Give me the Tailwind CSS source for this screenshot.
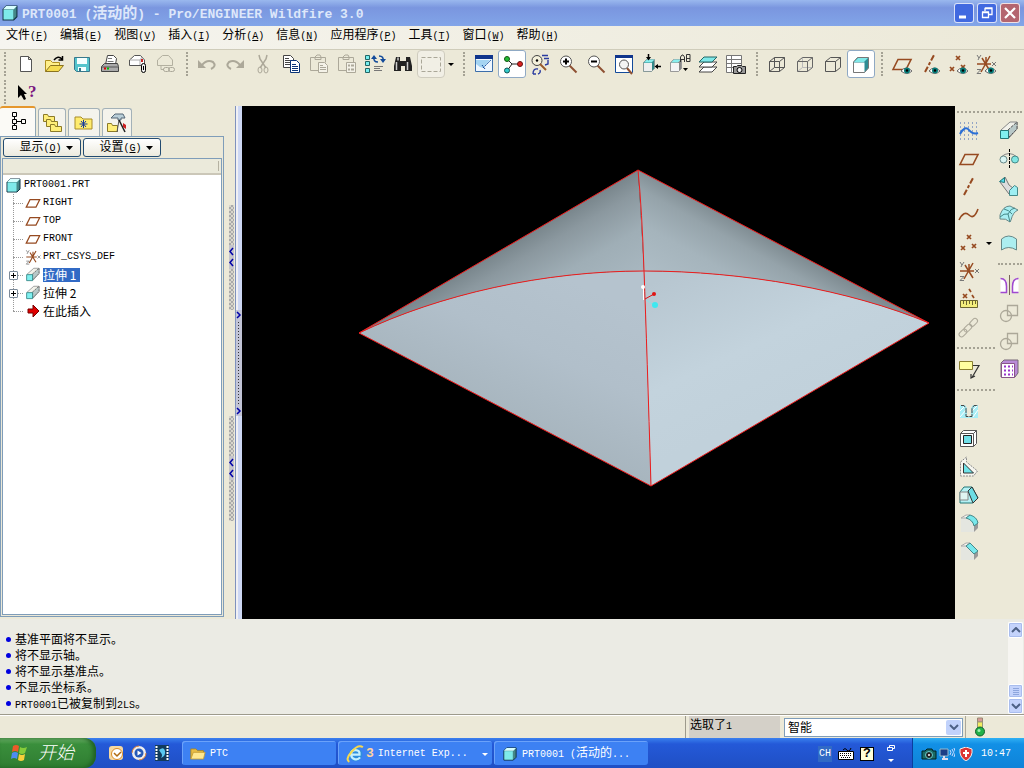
<!DOCTYPE html>
<html lang="zh-CN">
<head>
    <meta charset="UTF-8">
    <meta name="viewport" content="width=device-width, initial-scale=1.0">
    <title>PRT0001 (活动的) - Pro/ENGINEER Wildfire 3.0</title>
    <script src="https://cdn.jsdelivr.net/npm/@tailwindcss/browser@4"></script>
    <style>
        body { font-family: 'Liberation Mono', 'Noto Sans CJK SC', monospace; }
        .zh { font-family: 'Noto Sans CJK SC', sans-serif; font-size: 12px; }
        button, select { font-family: inherit; }
        symbol { fill: none; overflow: visible; }
    </style>
</head>
<body class="flex h-screen flex-col overflow-hidden bg-[#ece9d8] text-[10px] leading-4 text-black">

    <!-- Shared icons, all on a 24x24 grid -->
    <svg class="hidden">
        <symbol id="part" viewBox="0 0 24 24"><path d="M6 9l3-3h10v10l-3 3H6z" fill="#488" stroke="#134"/><path d="M6.500 9.500h9v9h-9z" fill="#7eeaea"/><path d="M6 9l3-3h10l-3 3z" fill="#d8ffff"/></symbol>
        <symbol id="new" viewBox="0 0 24 24"><path d="M6.500 4.500h8l3 3v12h-11zM14.500 4.500v3h3" fill="#fff" stroke="#555"/></symbol>
        <symbol id="open" viewBox="0 0 24 24"><path d="M3.500 19.500v-11h5l2 2h7v3" fill="#ffef8a" stroke="#b09020"/><path d="M3.500 19.500l5-6h13l-5 6z" fill="#f5dc50" stroke="#8a7320"/><path d="M12 8q4-5 8-1M20.500 4v4h-4" stroke="#000" stroke-width="1.500"/></symbol>
        <symbol id="save" viewBox="0 0 24 24"><path d="M4.500 5.500h15v14h-13l-2-2z" fill="#54c4cc" stroke="#38788c"/><path d="M7 6h10v6H7zM8 15h8v4H8z" fill="#f4ffff"/><path d="M9 16h2v3H9z" fill="#38788c"/></symbol>
        <symbol id="print" viewBox="0 0 24 24"><path d="M7.500 12.500l2-9h6l3 3-1 6z" fill="#fff" stroke="#444"/><path d="M10 6.500h4M9.500 9.500h6" stroke="#777"/><path d="M3.500 14.500l3-3h13l1 3v5h-17z" fill="#aaa" stroke="#444"/><path d="M4 15h16" stroke="#555"/><path d="M6 16.500h2" stroke="#d00" stroke-width="2"/><path d="M9 16.500h2" stroke="#0b0" stroke-width="2"/></symbol>
        <symbol id="mail" viewBox="0 0 24 24"><path d="M3.500 13.500V8l5-4.500h6l4 4.500v5.500z" fill="#fff" stroke="#555"/><path d="M4 8h10l2-3M14 8v5" stroke="#aaa"/><path d="M15 7h2v3h-2z" fill="#c22"/><rect x="15.500" y="11.500" width="4" height="9" rx="2" fill="#eee" stroke="#000"/><path d="M17.500 14v4" stroke="#000"/></symbol>
        <symbol id="maillink" viewBox="0 0 24 24"><path d="M3.500 13.500V8l5-4.500h6l4 4.500v5.500zM7 13.500v4h3" stroke="#b3b0a0"/><rect x="9.500" y="15.500" width="6" height="4" rx="2" stroke="#aaa798"/><rect x="14.500" y="15.500" width="6" height="4" rx="2" stroke="#aaa798"/></symbol>
        <symbol id="undo" viewBox="0 0 24 24"><path d="M7 13q5-6 11-3 4 4-2 7" stroke="#aca899" stroke-width="2"/><path d="M3 8v8h8z" fill="#aca899"/></symbol>
        <symbol id="redo" viewBox="0 0 24 24"><path d="M17 13q-5-6-11-3-4 4 2 7" stroke="#aca899" stroke-width="2"/><path d="M21 8v8h-8z" fill="#aca899"/></symbol>
        <symbol id="cut" viewBox="0 0 24 24" stroke="#aca899"><path d="M8 3l1 4 6 9M16 3l-1 4-6 9" stroke-width="1.500"/><ellipse cx="9" cy="18" rx="2" ry="3"/><ellipse cx="15" cy="18" rx="2" ry="3"/></symbol>
        <symbol id="copy" viewBox="0 0 24 24"><path d="M4.500 3.500h7l3 3v9h-10z" fill="#fff" stroke="#444"/><path d="M6 6.500h4M6 8.500h6M6 10.500h6M6 12.500h6" stroke="#444"/><path d="M11.500 8.500h6l3 3v9h-9z" fill="#fff" stroke="#0a3478"/><path d="M13 12.500h4M13 14.500h6M13 16.500h6M13 18.500h6" stroke="#0a3478"/></symbol>
        <symbol id="paste" viewBox="0 0 24 24"><path d="M11.500 18.500h-8v-13h15v5M8 7.500V5l2-2h3l1 2v2.500z" stroke="#aca899"/><path d="M11.500 10.500h6l3 3v7h-9z" fill="#f4f2e8" stroke="#aca899"/><path d="M13 13.500h3M13 15.500h6M13 17.500h6" stroke="#aca899"/></symbol>
        <symbol id="pastesp" viewBox="0 0 24 24"><path d="M11.500 18.500h-8v-13h15v5M8 7.500V5l2-2h3l1 2v2.500z" stroke="#aca899"/><path d="M11.500 10.500h9v10h-9z" fill="#f4f2e8" stroke="#aca899"/><path d="M13 13.500h2M16 13.500h3M13 17.500h2M16 17.500h3" stroke="#aca899" stroke-width="2"/></symbol>
        <symbol id="regen" viewBox="0 0 24 24"><path d="M2.500 3.500h4v4h-4zM2.500 9.500h4v4h-4zM2.500 16.500h4v4h-4z" fill="#7ee" stroke="#266"/><path d="M16 4q5 0 4 5M15 10q-5 0-4-5" stroke="#124a9a" stroke-width="1.500"/><path d="M17 7h6l-3 4zM8 7h6l-3-4z" fill="#124a9a"/><path d="M11 14.500h9M11 16.500h6M11 18.500h8" stroke="#777"/></symbol>
        <symbol id="find" viewBox="0 0 24 24"><path d="M5 5h4v4h6V5h4l2 9v5h-7v-5h-4v5H3v-5z" fill="#222"/><path d="M5.500 10v8M16.500 10v8M7 5.500v3" stroke="#ccc" stroke-width="1.500"/></symbol>
        <symbol id="selbox" viewBox="0 0 24 24"><path d="M2.500 5.500h19v14h-19z" stroke="#aaa798" stroke-dasharray="4 2"/></symbol>
        <symbol id="repaint" viewBox="0 0 24 24"><path d="M3.500 3.500h17v16h-17z" fill="#eff7ff" stroke="#3c6eaa"/><path d="M3 3h18v4H3z" fill="#10358c"/><path d="M4 8h14l-7 8q-4-1-7-4z" fill="#a5d4f2"/><path d="M11 16l8-8M10 13l3 4" stroke="#124a9a" stroke-dasharray="2 1"/></symbol>
        <symbol id="spin" viewBox="0 0 24 24"><path d="M7 7l5 5h8M12 12l-5 7" stroke="#222"/><circle cx="7" cy="7" r="2.500" fill="#2b3" stroke="#151"/><circle cx="20" cy="12" r="2.500" fill="#d22" stroke="#611"/><circle cx="7" cy="18.500" r="2.500" fill="#3cc" stroke="#155"/></symbol>
        <symbol id="orient" viewBox="0 0 24 24"><circle cx="9" cy="8.500" r="5" fill="#f4f1dc" stroke="#444"/><circle cx="9" cy="8.500" r="1.200" fill="#000"/><path d="M12 12l6 6" stroke="#9a5a2a" stroke-width="2"/><path d="M14 3.500h6M16 6.500h5M20 8v4l-3 1M5 22q0-6 5-5M5 22h3M10 22q3-1 2-4" stroke="#2a3ca0" stroke-width="1.400"/></symbol>
        <symbol id="zoomin" viewBox="0 0 24 24"><path d="M13.500 13.500l7 7" stroke="#8e5032" stroke-width="2"/><circle cx="10" cy="9.500" r="5.500" fill="#fff" stroke="#555"/><path d="M7 9.500h6M10 6.500v6" stroke="#000" stroke-width="2"/></symbol>
        <symbol id="zoomout" viewBox="0 0 24 24"><path d="M13.500 13.500l7 7" stroke="#8e5032" stroke-width="2"/><circle cx="10" cy="9.500" r="5.500" fill="#fff" stroke="#555"/><path d="M7 9.500h6" stroke="#000" stroke-width="2"/></symbol>
        <symbol id="refit" viewBox="0 0 24 24"><path d="M3.500 3.500h17v17h-17z" fill="#fff" stroke="#124a9a"/><path d="M3 3h18v3H3z" fill="#10358c"/><path d="M15 16l5 6" stroke="#8e5032" stroke-width="2"/><circle cx="12" cy="12.500" r="4.500" fill="#f4f4f4" stroke="#555"/></symbol>
        <symbol id="reorient" viewBox="0 0 24 24"><path d="M3.500 10.500l3-3h8v9l-3 3h-8z" fill="#388" stroke="#899"/><path d="M4 11h8v8H4z" fill="#eee"/><path d="M4 10.500l3-3h7.500l-3 3z" fill="#8ee"/><path d="M8.500 2v5M21 14.500h-5" stroke="#000" stroke-width="1.500"/><path d="M6 5h5L8.500 8.500zM18 12v5l-3.500-2.500z" fill="#000"/></symbol>
        <symbol id="views" viewBox="0 0 24 24"><path d="M2.500 10.500l3-3h8v9l-3 3h-8z" fill="#888" stroke="#999"/><path d="M3 11h8v8H3z" fill="#f4f4f4"/><path d="M3 10.500l3-3h7l-3 3z" fill="#8ee"/><path d="M12.500 10V5l1.500-2h1l1.500 2v5M12.500 7.500h4M18.500 2.500v7h3.500v-3h-3.500M22 6.500v-4h-3.500" stroke="#333"/><path d="M15 16h5l-2.500 3z" fill="#000"/></symbol>
        <symbol id="layers" viewBox="0 0 24 24" stroke="#444"><path d="M3 20l5-5h13l-5 5z" fill="#fff"/><path d="M3 15l5-5h13l-5 5z" fill="#fff"/><path d="M3 10l5-5h13l-5 5z" fill="#7fe8e8" stroke="#266"/></symbol>
        <symbol id="viewmgr" viewBox="0 0 24 24"><path d="M2.500 3.500h15v17h-15zM7.500 3.500v17M2.500 7.500h15M2.500 11.500h15M2.500 15.500h15" fill="#fff" stroke="#777"/><path d="M9.500 14.500h3l1-1h4l1 1h3v7h-12z" fill="#999" stroke="#222"/><circle cx="15.500" cy="18" r="2.500" fill="#eee" stroke="#000"/></symbol>
        <symbol id="wire" viewBox="0 0 24 24" stroke="#555"><path d="M4.500 9.500h10v10h-10zM9.500 5.500h10v10h-10zM4.500 9.500l5-4M14.500 9.500l5-4M14.500 19.500l5-4M4.500 19.500l5-4"/></symbol>
        <symbol id="hidden" viewBox="0 0 24 24" stroke="#666"><path d="M9.500 5.500v10h10M4.500 19.500l5-4" stroke="#bbb"/><path d="M4.500 9.500h10v10h-10zM9.500 5.500h10v10M4.500 9.500l5-4M14.500 9.500l5-4M14.500 19.500l5-4"/></symbol>
        <symbol id="nohidden" viewBox="0 0 24 24" stroke="#555"><path d="M4.500 9.500h10v10h-10zM9.500 5.500h10v10M4.500 9.500l5-4M14.500 9.500l5-4M14.500 19.500l5-4"/></symbol>
        <symbol id="shade" viewBox="0 0 24 24"><path d="M4.500 10l4-4.500h11v10.500l-4 4.500h-11z" fill="#2e8c94" stroke="#777"/><path d="M5 10.500h10.500V20H5z" fill="#fff"/><path d="M5 10l4-4h10l-4 4z" fill="#80e8e8"/></symbol>
        <symbol id="plane" viewBox="0 0 24 24"><path d="M3 17.500L8 7.500h13l-5 10z" stroke="#964a20" stroke-width="1.600"/></symbol>
        <symbol id="axis" viewBox="0 0 24 24"><path d="M7 20L16 3" stroke="#964a20" stroke-width="2" stroke-dasharray="6 2 3 2"/></symbol>
        <symbol id="points" viewBox="0 0 24 24"><path d="M10 4l4 4M14 4l-4 4M4 15l4 4M8 15l-4 4M15 13l4 4M19 13l-4 4" stroke="#964a20" stroke-width="1.700"/></symbol>
        <symbol id="csys" viewBox="0 0 24 24"><path d="M3 12h14M7 20L16 4M8 6l8 13M12 5v7" stroke="#964a20" stroke-width="1.500"/><path d="M3 3l2 3 2-3M5 6l-1 2M18 10l4 4M22 10l-4 4M3 17.500h4l-4 4h4" stroke="#777"/></symbol>
        <symbol id="eye" viewBox="0 0 24 24"><path d="M11 19q5-6 11 0-5 5-11 0z" fill="#fff" stroke="#666"/><circle cx="17" cy="18.500" r="3" fill="#077b78"/><circle cx="17" cy="18.500" r="1.200" fill="#000"/></symbol>
        <symbol id="sketch" viewBox="0 0 24 24"><path d="M3 4h18M3 8h18M3 12h18M3 16h18M3 20h18" stroke="#3b62b4" stroke-dasharray="1 3"/><path d="M3 15q5-9 9-4t9 3" stroke="#2a6fd6" stroke-width="2"/></symbol>
        <symbol id="curve" viewBox="0 0 24 24"><path d="M2 17q5-10 10-5t9-6" stroke="#964a20" stroke-width="1.600"/></symbol>
        <symbol id="analysis" viewBox="0 0 24 24"><path d="M6 7l4 4M10 7l-4 4M12 2l2 3M15 8l2 3" stroke="#964a20" stroke-width="1.700"/><path d="M3.500 13.500h17v7h-17z" fill="#f3ee7c" stroke="#6b6530"/><path d="M6.500 14v3M9.500 14v4M12.500 14v3M15.500 14v4M18.500 14v3" stroke="#6b6530"/></symbol>
        <symbol id="chain" viewBox="0 0 24 24" stroke="#aca899"><g transform="rotate(-45 12 12)"><rect x="-1" y="9.500" width="9" height="5" rx="2.500"/><rect x="6" y="9.500" width="9" height="5" rx="2.500"/><rect x="14" y="9.500" width="9" height="5" rx="2.500"/></g></symbol>
        <symbol id="note" viewBox="0 0 24 24"><path d="M2.500 4.500h13v8h-13z" fill="#ffffa0" stroke="#8a8030"/><path d="M16 8.500h6l-7 12M14 17v4l4-2" stroke="#333" stroke-width="1.200"/></symbol>
        <symbol id="hole" viewBox="0 0 24 24"><path d="M3 6h5l2 3v9h4V9l2-3h5v13H3z" fill="#a8eef6"/><path d="M3 12l5-5M3 18l6-7M16 18l5-7M15 12l5-5" stroke="#fff"/><path d="M4 6.500h3l2 3v8h6v-8l2-3h4" stroke="#444" stroke-dasharray="5 1"/></symbol>
        <symbol id="shell" viewBox="0 0 24 24"><path d="M3.500 6.500l3-3h13v13l-3 3h-13z" fill="#fff" stroke="#555"/><path d="M3.500 6.500h13v13M16.500 6.500l3-3" stroke="#555"/><path d="M6.500 8.500h8v8h-8z" fill="#70dfe8" stroke="#222"/></symbol>
        <symbol id="rib" viewBox="0 0 24 24"><path d="M3.500 7l6-5v5l11 9-4 5h-13z" fill="#f6f6f0" stroke="#888" stroke-dasharray="2 1"/><path d="M6.500 8v10h10z" fill="#6fe4ea" stroke="#333"/></symbol>
        <symbol id="draft" viewBox="0 0 24 24"><path d="M3 9l4-5h8l6 11-5 5H3z" fill="#b4f1f4" stroke="#277"/><path d="M3 9h8v8H3z" fill="#e0f5f2" stroke="#888"/><path d="M11 8l4-4 6 11-5 5z" fill="#6cdde4" stroke="#333"/></symbol>
        <symbol id="round" viewBox="0 0 24 24"><path d="M4 7h5q7 2 8 8v6H4z" fill="#e4e6e0"/><path d="M17 14l4-3v6l-4 4z" fill="#999"/><path d="M4 7l5-3h4L9 7z" fill="#f6f6f0" stroke="#aaa"/><path d="M9 7l4-3q7 2 8 8l-4 3q-1-6-8-8z" fill="#79e8ec" stroke="#488"/></symbol>
        <symbol id="chamfer" viewBox="0 0 24 24"><path d="M4 7h5l8 8v6H4z" fill="#e4e6e0"/><path d="M17 14l4-3v6l-4 4z" fill="#999"/><path d="M4 7l5-3h4L9 7z" fill="#f6f6f0" stroke="#aaa"/><path d="M9 7l4-3 8 8-4 3z" fill="#79e8ec" stroke="#488"/></symbol>
        <symbol id="extrude" viewBox="0 0 24 24"><path d="M4 11L13 3h7v7l-8 9" fill="#f1f1ea" stroke="#888"/><path d="M11 11l9-8v7l-9 9z" fill="#b8c8c8" stroke="#555" stroke-dasharray="3 1"/><path d="M3.500 11.500h8v8h-8z" fill="#7ff0f0" stroke="#277"/></symbol>
        <symbol id="revolve" viewBox="0 0 24 24"><path d="M4 10q8-7 16 0" stroke="#888"/><circle cx="6.500" cy="12.500" r="3.500" fill="#d8f4f2" stroke="#688"/><circle cx="18" cy="12.500" r="3.500" fill="#80e6e2" stroke="#488"/><path d="M12.500 2v19" stroke="#000" stroke-dasharray="3 1"/></symbol>
        <symbol id="sweep" viewBox="0 0 24 24"><path d="M3 7l5-5 4 8 4 3-4 6z" fill="#ddd" stroke="#777"/><path d="M2.500 6.500l5-4v5z" fill="#5de" stroke="#277"/><path d="M12.500 15.500l5-5 3 2v8h-8z" fill="#9eeef2" stroke="#488"/></symbol>
        <symbol id="blend" viewBox="0 0 24 24"><path d="M3 12q3-9 10-9l8 4q-5 2-7 10l-1 2q-4-4-10-3z" fill="#a8eef2" stroke="#688"/><path d="M3 14q4-4 8-3 3-6 7-6M7 6q5 1 8 5M11 11l2 8" stroke="#488"/></symbol>
        <symbol id="style" viewBox="0 0 24 24"><path d="M4.500 8q7-6 15 0v11q-8-5-15 0z" fill="#aceef0" stroke="#688"/></symbol>
        <symbol id="mirror" viewBox="0 0 24 24"><path d="M12.500 2v20" stroke="#765"/><path d="M3.500 5.500q6 0 6 8v6h-6M21.500 5.500q-6 0-6 8v6h6" fill="#fff" stroke="#a04ad0" stroke-width="1.500"/></symbol>
        <symbol id="merge" viewBox="0 0 24 24" stroke="#aca899" stroke-width="1.300"><circle cx="9" cy="15" r="5.500"/><path d="M10.500 4.500h10v10h-10z"/></symbol>
        <symbol id="pattern" viewBox="0 0 24 24"><path d="M4 6l3-3h14v13l-3 4H4z" fill="#b98ad8" stroke="#767"/><path d="M4.500 6.500h13v14h-13z" fill="#fff" stroke="#858"/><path d="M7 9.500h9M7 13.500h9M7 17.500h9" stroke="#93c" stroke-width="2" stroke-dasharray="2 2"/></symbol>
        <symbol id="folder" viewBox="0 0 24 24"><path d="M3 18V6h6l2 2h9v10z" fill="#ffec6e" stroke="#a88c28"/></symbol>
        <symbol id="folder-xp" viewBox="0 0 24 24"><path d="M4 18V6h6l2 2h7v3" fill="#e9bd45" stroke="#a88420"/><path d="M4 18l3-8h14l-2 8z" fill="#ffe890" stroke="#c49a30"/></symbol>
    </svg>

    <!-- Title bar -->
    <header class="flex h-[26px] shrink-0 items-center bg-linear-to-b from-[#9ab8ee] via-[#7a96df] via-30% to-[#82a5e8] pr-1 pl-0.5 text-[#dde7fa]">
        <svg class="mr-0.5 size-4" viewBox="5 5 15 15"><use href="#part" width="24" height="24"/></svg>
        <h1 class="flex-1 pl-0.5 text-[13px] font-bold whitespace-pre">PRT0001 (<span class="zh text-[15px]!">活动的</span>) - Pro/ENGINEER Wildfire 3.0</h1>
        <div class="flex gap-[3px]">
            <button aria-label="最小化" class="size-5 rounded-[3px] border border-white/80 bg-[#4169e0]"><svg viewBox="0 0 18 18"><path d="M4 13h7" stroke="#fff" stroke-width="3"/></svg></button>
            <button aria-label="还原" class="size-5 rounded-[3px] border border-white/80 bg-[#4169e0]"><svg viewBox="0 0 18 18" fill="none" stroke="#fff"><path d="M7 7V4.500h7v6h-3M4.500 8.500h6v5h-6zM4 8h7M7 4h7.500" stroke-width="1.300"/></svg></button>
            <button aria-label="关闭" class="size-5 rounded-[3px] border border-white/80 bg-[#b4656f]"><svg viewBox="0 0 18 18"><path d="M4 4l10 10M14 4L4 14" stroke="#fff" stroke-width="2.200"/></svg></button>
        </div>
    </header>

    <!-- Menu bar -->
    <nav class="flex h-6 shrink-0 items-center gap-3 border-b border-[#cfccba] bg-linear-to-r from-[#f6f5f0] to-[#ece9d8] pb-1 pl-1.5 whitespace-nowrap">
        <button><span class="zh">文件</span>(<u>F</u>)</button>
        <button><span class="zh">编辑</span>(<u>E</u>)</button>
        <button><span class="zh">视图</span>(<u>V</u>)</button>
        <button><span class="zh">插入</span>(<u>I</u>)</button>
        <button><span class="zh">分析</span>(<u>A</u>)</button>
        <button><span class="zh">信息</span>(<u>N</u>)</button>
        <button><span class="zh">应用程序</span>(<u>P</u>)</button>
        <button><span class="zh">工具</span>(<u>T</u>)</button>
        <button><span class="zh">窗口</span>(<u>W</u>)</button>
        <button><span class="zh">帮助</span>(<u>H</u>)</button>
    </nav>

    <!-- Toolbars -->
    <div class="flex h-7 shrink-0 items-center">
        <i class="mr-[6px] ml-1 h-6 border-l-2 border-dotted border-[#a5a294]"></i>
        <button aria-label="新建" class="size-7 p-0.5"><svg class="size-6"><use href="#new"/></svg></button>
        <button aria-label="打开" class="size-7 p-0.5"><svg class="size-6"><use href="#open"/></svg></button>
        <button aria-label="保存" class="size-7 p-0.5"><svg class="size-6"><use href="#save"/></svg></button>
        <button aria-label="打印" class="size-7 p-0.5"><svg class="size-6"><use href="#print"/></svg></button>
        <button aria-label="发送邮件" class="size-7 p-0.5"><svg class="size-6"><use href="#mail"/></svg></button>
        <button aria-label="发送链接" class="size-7 p-0.5"><svg class="size-6"><use href="#maillink"/></svg></button>
        <i class="mr-[5px] ml-[6px] h-6 border-l-2 border-dotted border-[#a5a294]"></i>
        <button aria-label="撤消" class="size-7 p-0.5"><svg class="size-6"><use href="#undo"/></svg></button>
        <button aria-label="重做" class="size-7 p-0.5"><svg class="size-6"><use href="#redo"/></svg></button>
        <button aria-label="剪切" class="size-7 p-0.5"><svg class="size-6"><use href="#cut"/></svg></button>
        <button aria-label="复制" class="size-7 p-0.5"><svg class="size-6"><use href="#copy"/></svg></button>
        <button aria-label="粘贴" class="size-7 p-0.5"><svg class="size-6"><use href="#paste"/></svg></button>
        <button aria-label="选择性粘贴" class="size-7 p-0.5"><svg class="size-6"><use href="#pastesp"/></svg></button>
        <button aria-label="再生" class="size-7 p-0.5"><svg class="size-6"><use href="#regen"/></svg></button>
        <button aria-label="查找" class="size-7 p-0.5"><svg class="size-6"><use href="#find"/></svg></button>
        <button aria-label="选取框" class="size-7 rounded-sm border border-[#cfccbe] bg-[#f1efe5] p-px"><svg class="size-6"><use href="#selbox"/></svg></button>
        <button aria-label="选取选项" class="flex h-7 w-3 items-center justify-center"><svg class="h-[3px] w-[6px]" viewBox="0 0 6 3"><path d="M0 0h6L3 3z"/></svg></button>
        <i class="mr-[5px] ml-[6px] h-6 border-l-2 border-dotted border-[#a5a294]"></i>
        <button aria-label="重画" class="size-7 p-0.5"><svg class="size-6"><use href="#repaint"/></svg></button>
        <button aria-label="旋转中心" class="size-7 rounded-[3px] border border-[#8fa9c4] bg-white p-px"><svg class="size-6"><use href="#spin"/></svg></button>
        <button aria-label="定向模式" class="size-7 p-0.5"><svg class="size-6"><use href="#orient"/></svg></button>
        <button aria-label="放大" class="size-7 p-0.5"><svg class="size-6"><use href="#zoomin"/></svg></button>
        <button aria-label="缩小" class="size-7 p-0.5"><svg class="size-6"><use href="#zoomout"/></svg></button>
        <button aria-label="重新调整" class="size-7 p-0.5"><svg class="size-6"><use href="#refit"/></svg></button>
        <button aria-label="重定向" class="size-7 p-0.5"><svg class="size-6"><use href="#reorient"/></svg></button>
        <button aria-label="已命名视图" class="size-7 p-0.5"><svg class="size-6"><use href="#views"/></svg></button>
        <button aria-label="层" class="size-7 p-0.5"><svg class="size-6"><use href="#layers"/></svg></button>
        <button aria-label="视图管理器" class="size-7 p-0.5"><svg class="size-6"><use href="#viewmgr"/></svg></button>
        <i class="mr-[5px] ml-[6px] h-6 border-l-2 border-dotted border-[#a5a294]"></i>
        <button aria-label="线框" class="size-7 p-0.5"><svg class="size-6"><use href="#wire"/></svg></button>
        <button aria-label="隐藏线" class="size-7 p-0.5"><svg class="size-6"><use href="#hidden"/></svg></button>
        <button aria-label="无隐藏线" class="size-7 p-0.5"><svg class="size-6"><use href="#nohidden"/></svg></button>
        <button aria-label="着色" class="size-7 rounded-[3px] border border-[#8fa9c4] bg-white p-px"><svg class="size-6"><use href="#shade"/></svg></button>
        <i class="mr-[5px] ml-[6px] h-6 border-l-2 border-dotted border-[#a5a294]"></i>
        <button aria-label="显示基准平面" class="size-7 p-0.5"><svg class="size-6"><use href="#plane"/><use href="#eye"/></svg></button>
        <button aria-label="显示轴" class="size-7 p-0.5"><svg class="size-6"><use href="#axis"/><use href="#eye"/></svg></button>
        <button aria-label="显示点" class="size-7 p-0.5"><svg class="size-6"><use href="#points"/><use href="#eye"/></svg></button>
        <button aria-label="显示坐标系" class="size-7 p-0.5"><svg class="size-6"><use href="#csys"/><use href="#eye"/></svg></button>
    </div>
    <div class="flex h-7 shrink-0 items-center">
        <i class="mr-[6px] ml-1 h-6 border-l-2 border-dotted border-[#a5a294]"></i>
        <button aria-label="上下文帮助" class="flex size-7 items-center pl-1.5">
            <svg class="h-4 w-2.5 shrink-0" viewBox="0 0 10 16"><path d="M0 1l9 9H6l2 5-2 1-3-5-3 3z"/></svg>
            <b class="font-['Liberation_Serif'] text-[17px] text-[#7a1680]">?</b>
        </button>
    </div>

    <main class="flex min-h-0 flex-1">
        <!-- Model tree -->
        <aside class="flex w-56 shrink-0 flex-col pb-0.5">
            <div class="flex h-[30px] items-end gap-0.5">
                <button aria-label="模型树" class="flex h-[30px] w-9 items-center justify-center rounded-t-[3px] border-t-2 border-r border-[#91a7b4] border-t-[#e5972d] bg-[#fbfaf6]">
                    <svg class="size-6" fill="none" stroke="#000"><path d="M6.500 2.500h4v4h-4zM6.500 9.500h4v4h-4zM6.500 15.500h4v4h-4zM15.500 9.500h4v4h-4zM8.500 6.500v3M8.500 13.500v2M10.500 11.500h5"/></svg>
                </button>
                <button aria-label="文件夹浏览器" class="flex h-7 w-7 items-center justify-center rounded-t-[3px] border border-b-0 border-[#a3b1b8] bg-[#f4f3ec]">
                    <svg class="size-6 shrink-0" fill="#ffee78" stroke="#8c7a28"><path d="M3.500 10.500v-7h4l1 2h6v5z"/><path d="M6.500 15.500v-7h4l1 2h6v5z"/><path d="M10.500 20.500v-7h4l1 2h6v5z"/></svg>
                </button>
                <button aria-label="收藏夹" class="flex h-7 w-8 items-center justify-center rounded-t-[3px] border border-b-0 border-[#a3b1b8] bg-[#f4f3ec]">
                    <svg class="size-6" fill="none"><use href="#folder"/><path d="M11.500 9v8M7.500 13h8M9 10l5 6M14 10l-5 6" stroke="#183c9c"/></svg>
                </button>
                <button aria-label="连接" class="flex h-7 w-[30px] items-center justify-center rounded-t-[3px] border border-b-0 border-[#a3b1b8] bg-[#f4f3ec]">
                    <svg class="size-6" fill="none"><path d="M2.500 20.500v-8h4l1 2h5v6z" fill="#ffee78" stroke="#8c7a28"/><path d="M6 7l4-4h8l2 4h-4v2h-3V7H9z" fill="#b9ced8" stroke="#567"/><path d="M14 9l-2 12" stroke="#555"/><path d="M14 9l6 12" stroke="#222" stroke-width="1.500"/><path d="M18 12l3 2v4l-3-2z" fill="#c22"/></svg>
                </button>
            </div>
            <div class="flex min-h-0 flex-1 flex-col border border-[#7f9db9] p-px pt-0">
                <div class="flex h-[21px] items-center gap-0.5 pl-px">
                    <button class="flex h-[19px] w-[78px] items-center justify-center gap-1 rounded-[3px] border border-[#234b70] bg-linear-to-b from-white to-[#eceade] pl-2"><span><span class="zh">显示</span>(<u>O</u>)</span><svg class="h-1 w-[7px]" viewBox="0 0 7 4"><path d="M0 0h7L3.500 4z"/></svg></button>
                    <button class="flex h-[19px] w-[78px] items-center justify-center gap-1 rounded-[3px] border border-[#234b70] bg-linear-to-b from-white to-[#eceade] pl-2"><span><span class="zh">设置</span>(<u>G</u>)</span><svg class="h-1 w-[7px]" viewBox="0 0 7 4"><path d="M0 0h7L3.500 4z"/></svg></button>
                </div>
                <div class="flex flex-1 flex-col border border-[#7f9db9] bg-white">
                    <div class="flex h-4 justify-end border-b-2 border-[#cbc7b8] bg-[#ebeadb] py-0.5 pr-0.5"><i class="border-l border-[#b5b2a2]"></i></div>
                    <div class="pt-px pl-[3px]">
                        <div class="flex h-[18px] items-center gap-0.5"><svg class="-ml-0.5 size-[18px]" viewBox="3 3 18 18"><use href="#part" width="24" height="24"/></svg>PRT0001.PRT</div>
                        <ul class="relative pl-[7px] before:absolute before:top-0 before:bottom-[9px] before:left-[7px] before:border-l before:border-dotted before:border-[#999]">
                            <li class="flex h-[18px] items-center gap-px"><i class="w-2.5 border-t border-dotted border-[#999]"></i><svg class="size-[18px]" viewBox="0 0 24 24"><use href="#plane" width="24" height="24"/></svg>RIGHT</li>
                            <li class="flex h-[18px] items-center gap-px"><i class="w-2.5 border-t border-dotted border-[#999]"></i><svg class="size-[18px]" viewBox="0 0 24 24"><use href="#plane" width="24" height="24"/></svg>TOP</li>
                            <li class="flex h-[18px] items-center gap-px"><i class="w-2.5 border-t border-dotted border-[#999]"></i><svg class="size-[18px]" viewBox="0 0 24 24"><use href="#plane" width="24" height="24"/></svg>FRONT</li>
                            <li class="flex h-[18px] items-center gap-px"><i class="w-2.5 border-t border-dotted border-[#999]"></i><svg class="size-[18px]" viewBox="0 0 24 24"><use href="#csys" width="24" height="24"/></svg>PRT_CSYS_DEF</li>
                            <li class="flex h-[18px] items-center gap-px"><i class="w-2.5 border-t border-dotted border-[#999]"></i><svg class="size-[18px]" viewBox="0 0 24 24"><use href="#extrude" width="24" height="24"/></svg><span class="zh h-[14px] bg-[#316ac5] pr-1 leading-[14px] text-white">拉伸 1</span>
                                <button aria-label="展开" class="absolute left-[3px] size-[9px] rounded-[1px] border border-[#7b8a99] bg-white"><svg class="size-[7px]"><path d="M1 3.500h5M3.500 1v5" stroke="#000"/></svg></button></li>
                            <li class="flex h-[18px] items-center gap-px"><i class="w-2.5 border-t border-dotted border-[#999]"></i><svg class="size-[18px]" viewBox="0 0 24 24"><use href="#extrude" width="24" height="24"/></svg><span class="zh">拉伸 2</span>
                                <button aria-label="展开" class="absolute left-[3px] size-[9px] rounded-[1px] border border-[#7b8a99] bg-white"><svg class="size-[7px]"><path d="M1 3.500h5M3.500 1v5" stroke="#000"/></svg></button></li>
                            <li class="flex h-[18px] items-center gap-px"><i class="w-2.5 border-t border-dotted border-[#999]"></i><svg class="size-[18px]" viewBox="0 0 18 18"><path d="M4 7h5V3l6 6-6 6v-4H4z" fill="#e00000" stroke="#700"/></svg><span class="zh">在此插入</span></li>
                        </ul>
                    </div>
                </div>
            </div>
        </aside>

        <!-- Sashes -->
        <div class="flex w-[11px] shrink-0 flex-col items-center justify-center gap-[106px] pl-1">
            <div class="flex h-[105px] w-[5px] items-center justify-center bg-[repeating-conic-gradient(#aaa_0_25%,#d8d6cc_0_50%)] bg-size-[4px_4px]">
                <svg class="h-6 w-[5px] bg-[#c4c4cc]" viewBox="0 0 5 24" fill="none" stroke="#0000a8" stroke-width="1.500"><path d="M4 3L1 6.500 4 10M4 14l-3 3.500L4 21"/></svg>
            </div>
            <div class="flex h-[105px] w-[5px] items-center justify-center bg-[repeating-conic-gradient(#aaa_0_25%,#d8d6cc_0_50%)] bg-size-[4px_4px]">
                <svg class="h-6 w-[5px] bg-[#c4c4cc]" viewBox="0 0 5 24" fill="none" stroke="#0000a8" stroke-width="1.500"><path d="M4 3L1 6.500 4 10M4 14l-3 3.500L4 21"/></svg>
            </div>
        </div>
        <div class="flex w-[7px] shrink-0 items-center border-x border-r-4 border-[#7f92bd] border-r-[#ced8f4] bg-[#f0f0f4]">
            <svg class="h-[106px] w-[6px] shrink-0 bg-[#c2c4d6]" viewBox="0 0 6 106" fill="none" stroke="#0000a8" stroke-width="1.500"><path d="M1 2l3 3-3 3M1 98l3 3-3 3"/><path d="M2.500 12v83" stroke="#333" stroke-width="1" stroke-dasharray="1 2"/></svg>
        </div>

        <!-- Graphics window -->
        <section class="min-w-0 flex-1 bg-black">
            <svg class="h-full w-full" viewBox="242 106 713 513" fill="none">
                <defs>
                    <linearGradient id="gBackL" gradientUnits="userSpaceOnUse" x1="497" y1="251" x2="545" y2="334"><stop offset="0" stop-color="#78858b"/><stop offset=".2" stop-color="#8b989f"/><stop offset=".55" stop-color="#9faeb6"/><stop offset="1" stop-color="#a9b8c1"/></linearGradient>
                    <linearGradient id="gBackR" gradientUnits="userSpaceOnUse" x1="784" y1="246" x2="735" y2="334"><stop offset="0" stop-color="#7e8b91"/><stop offset=".2" stop-color="#95a3aa"/><stop offset=".5" stop-color="#a5b4bc"/><stop offset="1" stop-color="#b0bfc8"/></linearGradient>
                    <linearGradient id="gFrontL" gradientUnits="userSpaceOnUse" x1="570" y1="280" x2="505" y2="420"><stop offset="0" stop-color="#b5c3ce"/><stop offset=".5" stop-color="#b1bfca"/><stop offset="1" stop-color="#a7b5be"/></linearGradient>
                    <linearGradient id="gFrontR" gradientUnits="userSpaceOnUse" x1="680" y1="270" x2="750" y2="420"><stop offset="0" stop-color="#b7c6d0"/><stop offset=".6" stop-color="#c3d3dd"/><stop offset="1" stop-color="#c1d1db"/></linearGradient>
                </defs>
                <path d="M638 170L359 333C440 294 545 271 644 271z" fill="url(#gBackL)"/>
                <path d="M638 170l291 153C850 290 743 271 644 271z" fill="url(#gBackR)"/>
                <path d="M359 333C440 294 545 271 644 271 647 350 651 486 651 486z" fill="url(#gFrontL)"/>
                <path d="M929 323C850 290 743 271 644 271L651 486z" fill="url(#gFrontR)"/>
                <path d="M638 170L359 333l292 153 278-163zM359 333C440 294 545 271 644 271S850 290 929 323M638 170q4 40 6 101 3 79 7 215" stroke="#ee1c1c"/>
                <path d="M643.500 288v12" stroke="#fff"/>
                <circle cx="643" cy="287" r="2" fill="#fff"/>
                <path d="M645 299l9-5" stroke="#d11"/>
                <circle cx="654" cy="294" r="2" fill="#e01414"/>
                <path d="M646 300l8 5" stroke="#8edfe6"/>
                <circle cx="655" cy="305" r="3" fill="#3fe8f0"/>
            </svg>
        </section>

        <!-- Feature toolbars -->
        <aside class="grid w-[69px] shrink-0 grid-cols-[42px_27px] items-start">
            <div class="flex flex-col">
                <i class="mx-0.5 mt-[5px] mb-1 border-t-2 border-dotted border-[#a5a294]"></i>
                <button aria-label="草绘" class="size-7 p-0.5"><svg class="size-6"><use href="#sketch"/></svg></button>
                <button aria-label="基准平面" class="size-7 p-0.5"><svg class="size-6"><use href="#plane"/></svg></button>
                <button aria-label="基准轴" class="size-7 p-0.5"><svg class="size-6"><use href="#axis"/></svg></button>
                <button aria-label="基准曲线" class="size-7 p-0.5"><svg class="size-6"><use href="#curve"/></svg></button>
                <div class="flex items-center gap-[3px]">
                    <button aria-label="基准点" class="size-7 p-0.5"><svg class="size-6"><use href="#points"/></svg></button>
                    <button aria-label="基准点选项"><svg class="h-[3px] w-[6px]" viewBox="0 0 6 3"><path d="M0 0h6L3 3z"/></svg></button>
                </div>
                <button aria-label="坐标系" class="size-7 p-0.5"><svg class="size-6"><use href="#csys"/></svg></button>
                <button aria-label="分析特征" class="size-7 p-0.5"><svg class="size-6"><use href="#analysis"/></svg></button>
                <button aria-label="参照" class="size-7 p-0.5"><svg class="size-6"><use href="#chain"/></svg></button>
                <i class="mx-0.5 my-1.5 border-t-2 border-dotted border-[#a5a294]"></i>
                <button aria-label="注释" class="size-7 p-0.5"><svg class="size-6"><use href="#note"/></svg></button>
                <i class="mx-0.5 my-1.5 border-t-2 border-dotted border-[#a5a294]"></i>
                <button aria-label="孔" class="size-7 p-0.5"><svg class="size-6"><use href="#hole"/></svg></button>
                <button aria-label="壳" class="size-7 p-0.5"><svg class="size-6"><use href="#shell"/></svg></button>
                <button aria-label="筋" class="size-7 p-0.5"><svg class="size-6"><use href="#rib"/></svg></button>
                <button aria-label="拔模" class="size-7 p-0.5"><svg class="size-6"><use href="#draft"/></svg></button>
                <button aria-label="倒圆角" class="size-7 p-0.5"><svg class="size-6"><use href="#round"/></svg></button>
                <button aria-label="倒角" class="size-7 p-0.5"><svg class="size-6"><use href="#chamfer"/></svg></button>
            </div>
            <div class="flex flex-col">
                <i class="mr-0.5 ml-px mt-[5px] mb-1 border-t-2 border-dotted border-[#a5a294]"></i>
                <button aria-label="拉伸" class="w-7 h-7 py-0.5"><svg class="size-6"><use href="#extrude"/></svg></button>
                <button aria-label="旋转" class="w-7 h-7 py-0.5"><svg class="size-6"><use href="#revolve"/></svg></button>
                <button aria-label="扫描" class="w-7 h-7 py-0.5"><svg class="size-6"><use href="#sweep"/></svg></button>
                <button aria-label="边界混合" class="w-7 h-7 py-0.5"><svg class="size-6"><use href="#blend"/></svg></button>
                <button aria-label="造型" class="w-7 h-7 py-0.5"><svg class="size-6"><use href="#style"/></svg></button>
                <i class="mr-0.5 ml-px my-1.5 border-t-2 border-dotted border-[#a5a294]"></i>
                <button aria-label="镜像" class="w-7 h-7 py-0.5"><svg class="size-6"><use href="#mirror"/></svg></button>
                <button aria-label="合并" class="w-7 h-7 py-0.5"><svg class="size-6"><use href="#merge"/></svg></button>
                <button aria-label="修剪" class="w-7 h-7 py-0.5"><svg class="size-6"><use href="#merge"/></svg></button>
                <button aria-label="阵列" class="w-7 h-7 py-0.5"><svg class="size-6"><use href="#pattern"/></svg></button>
            </div>
        </aside>
    </main>

    <!-- Message log -->
    <section class="flex h-24 shrink-0 justify-between border-b border-[#9d9a8c] bg-[#ebebe4]">
        <ul class="zh pt-3 pl-1.5">
            <li class="flex h-4 items-center gap-1"><i class="size-[5px] rounded-full bg-[#0000e0]"></i>基准平面将不显示。</li>
            <li class="flex h-4 items-center gap-1"><i class="size-[5px] rounded-full bg-[#0000e0]"></i>将不显示轴。</li>
            <li class="flex h-4 items-center gap-1"><i class="size-[5px] rounded-full bg-[#0000e0]"></i>将不显示基准点。</li>
            <li class="flex h-4 items-center gap-1"><i class="size-[5px] rounded-full bg-[#0000e0]"></i>不显示坐标系。</li>
            <li class="flex h-4 items-center gap-1"><i class="size-[5px] rounded-full bg-[#0000e0]"></i><span><span class="font-['Liberation_Mono'] text-[10px] leading-none">PRT0001</span>已被复制到<span class="font-['Liberation_Mono'] text-[10px] leading-none">2LS</span>。</span></li>
        </ul>
        <div class="mt-[3px] mr-px flex w-[15px] flex-col bg-[#f6f5f1]">
            <button aria-label="向上滚动" class="flex h-4 items-center justify-center rounded-xs border border-white bg-[#c4d3fb] ring-1 ring-[#a9bdee] ring-inset"><svg class="h-1.5 w-2.5" viewBox="0 0 10 6"><path d="M1 5l4-4 4 4" fill="none" stroke="#4d6185" stroke-width="2"/></svg></button>
            <div class="mt-auto flex h-3.5 flex-col items-center justify-center gap-px rounded-xs border border-white bg-[#c4d3fb] ring-1 ring-[#a9bdee] ring-inset">
                <i class="h-px w-1.5 bg-[#8ea6dd]"></i><i class="h-px w-1.5 bg-[#8ea6dd]"></i><i class="h-px w-1.5 bg-[#8ea6dd]"></i><i class="h-px w-1.5 bg-[#8ea6dd]"></i>
            </div>
            <button aria-label="向下滚动" class="flex h-4 items-center justify-center rounded-xs border border-white bg-[#c4d3fb] ring-1 ring-[#a9bdee] ring-inset"><svg class="h-1.5 w-2.5" viewBox="0 0 10 6"><path d="M1 1l4 4 4-4" fill="none" stroke="#4d6185" stroke-width="2"/></svg></button>
        </div>
    </section>

    <!-- Status bar -->
    <section class="flex h-[23px] shrink-0 items-center justify-end border-t border-white">
        <i class="mr-[3px] h-full border-l border-[#9d9a8c]"></i>
        <output class="zh h-full w-[91px] bg-[#d4d0c8] pl-px">选取了<span class="font-['Liberation_Mono'] text-[10px]">1</span></output>
        <div class="relative ml-1">
            <select aria-label="过滤器" class="zh block h-[19px] w-[179px] appearance-none border border-[#7f9db9] bg-white pl-[3px] leading-4 outline-none">
                <option>智能</option>
            </select>
            <span class="pointer-events-none absolute top-0.5 right-0.5 flex size-[15px] items-center justify-center rounded-xs bg-[#c1d2fb]"><svg class="h-1.5 w-2.5" viewBox="0 0 10 6"><path d="M1 1l4 4 4-4" fill="none" stroke="#4d6185" stroke-width="2"/></svg></span>
        </div>
        <i class="ml-0.5 h-full border-l border-[#aca899]"></i>
        <svg class="mr-[38px] ml-2 h-5 w-3" viewBox="0 0 12 20"><path d="M3.500 1h5v4h-5z" fill="#d89a94" stroke="#987"/><path d="M3.500 5h5v6h-5z" fill="#f3ec60" stroke="#997"/><circle cx="6" cy="14.500" r="4.500" fill="#22b24a" stroke="#14602a"/><circle cx="5" cy="13.500" r="1.500" fill="#a0f0b0"/></svg>
    </section>

    <!-- Taskbar -->
    <footer class="flex h-[30px] shrink-0 items-stretch bg-linear-to-b from-[#3b80ee] via-[#2459d8] via-20% to-[#1f4fc4] text-white">
        <button class="mr-3 flex w-24 items-center gap-2 rounded-r-xl bg-linear-to-b from-[#6db36a] via-[#3a8f3c] via-20% to-[#2f7d31] pl-2.5 shadow-[inset_-3px_0_4px_#1f5f22]">
            <svg class="size-5" viewBox="0 0 20 20"><path d="M3 3q3-2 6 0L8 9q-3-2-6 0z" fill="#ee5a2a"/><path d="M10 4q3 2 7 0l-2 6q-3 2-6 0z" fill="#86cc3a"/><path d="M2 10q3-2 6 0l-1 6q-3-2-6 0z" fill="#4e8cf2"/><path d="M9 11q3 2 6 0l-1 6q-3 2-6 0z" fill="#f9cf3a"/></svg>
            <span class="zh pb-1 text-[18px]! font-light italic">开始</span>
        </button>
        <div class="mr-3 flex items-center gap-[7px]">
            <button aria-label="Outlook" class="size-4"><svg viewBox="0 0 16 16"><rect x="1" y="1" width="14" height="14" rx="3" fill="#f7d9a0"/><circle cx="9" cy="9" r="5.500" fill="#fff" stroke="#d98b28"/><path d="M6 8l3 3 4-4" fill="none" stroke="#b06a10" stroke-width="1.500"/></svg></button>
            <button aria-label="媒体播放器" class="size-4"><svg viewBox="0 0 16 16"><circle cx="8" cy="8" r="7" fill="#eee" stroke="#e08030" stroke-dasharray="11 11"/><circle cx="8" cy="8" r="4.500" fill="#2459b8"/><path d="M6.500 5.500l4 2.500-4 2.500z" fill="#fff"/></svg></button>
            <button aria-label="影音" class="size-4"><svg viewBox="0 0 16 16"><path d="M1 0h14v16H1z" fill="#123b5c"/><path d="M2.500 1v14M13.500 1v14" stroke="#fff" stroke-width="2" stroke-dasharray="2 1"/><path d="M5 5q5-4 6 1t-4 7q2-3 0-5z" fill="#59c8f0"/></svg></button>
        </div>
        <div class="flex items-center gap-0.5 py-[3px]">
            <button class="flex h-full w-[154px] items-center gap-1 rounded-[3px] bg-[#3d81f3] pt-0.5 pl-2 shadow-[inset_1px_1px_#6ba2fa]"><svg class="size-4" viewBox="3 3 19 18"><use href="#folder-xp" width="24" height="24"/></svg>PTC</button>
            <button class="flex h-full w-[154px] items-center gap-0.5 rounded-[3px] bg-[#3d81f3] pt-0.5 pr-1 pl-2 shadow-[inset_1px_1px_#6ba2fa]">
                <svg class="size-[18px]" viewBox="0 0 16 16" fill="none"><circle cx="8.500" cy="8.500" r="6" fill="#2f8fdc"/><path d="M12.500 11q-2 2.500-5 1.500T4.500 8 8.500 4.500 12 8.500H5" stroke="#c4f0ff" stroke-width="2"/><path d="M3 15Q-1 13 5 6t10-4" stroke="#f6d850" stroke-width="1.800"/></svg>
                <b class="mr-0.5 text-[13px] text-[#ffd2a0]">3</b><span>Internet Exp...</span>
                <svg class="ml-auto h-[3px] w-[6px]" viewBox="0 0 6 3"><path d="M0 0h6L3 3z" fill="#fff"/></svg>
            </button>
            <button class="flex h-full w-[154px] items-center gap-1 rounded-[3px] bg-[#3d81f3] pt-0.5 pl-2 shadow-[inset_1px_1px_#6ba2fa]"><svg class="size-4" viewBox="4 4 17 17"><use href="#part" width="24" height="24"/></svg><span class="pb-0.5 whitespace-pre">PRT0001 (<span class="zh">活动的</span>...</span></button>
        </div>
        <div class="mr-4 ml-auto flex items-center gap-1.5 pt-0.5">
            <button class="bg-[#316ac5] px-px">CH</button>
            <button aria-label="键盘" class="size-4"><svg viewBox="0 0 16 16"><path d="M5 4q2-3 4 0t4-2" stroke="#000" fill="none"/><path d="M.500 5.500h15v8H.500z" fill="#fff" stroke="#000"/><path d="M2 7.500h12M2 9.500h12M3 11.500h10" stroke="#000" stroke-dasharray="1 1"/></svg></button>
            <button aria-label="帮助" class="flex size-3.5 items-center justify-center border border-black bg-[#ffffd8] text-[13px] font-bold text-black">?</button>
            <button aria-label="语言栏选项" class="ml-1.5 h-5 w-2.5"><svg viewBox="0 0 10 20" fill="none" stroke="#fff"><path d="M3.500 3V1.500h5v3H7M1.500 3.500h5v3h-5z"/><path d="M2 15h6l-3 3z" fill="#fff" stroke="none"/></svg></button>
        </div>
        <div class="flex w-28 items-center gap-0.5 border-l border-[#0a3f9e] bg-linear-to-b from-[#2fb0f4] via-[#1290e6] via-20% to-[#0f83d8] pt-0.5 pl-2">
            <svg class="size-4" viewBox="0 0 16 16"><path d="M1 5h3l2-2h5l1 2h3v8H1z" fill="#1b6b66" stroke="#022"/><circle cx="8" cy="9" r="3.500" fill="#222" stroke="#6cc"/><circle cx="8" cy="9" r="1" fill="#fff"/></svg>
            <svg class="size-4" viewBox="0 0 16 16" fill="none"><path d="M1 3h8v7H1z" fill="#1c3f86" stroke="#9bc"/><path d="M3 13h6M5 10v3" stroke="#dde" stroke-width="2"/><path d="M11 4q2 2 0 5M13 3q3 3 0 7M15 2q3 4 0 9" stroke="#cdf"/></svg>
            <svg class="ml-0.5 size-3.5" viewBox="0 0 14 14"><path d="M7 0l6 2q1 8-6 12Q0 10 1 2z" fill="#d33" stroke="#eee"/><path d="M7 3v7M4 6h6" stroke="#fff" stroke-width="2"/></svg>
            <time class="ml-1.5">10:47</time>
        </div>
    </footer>
</body>
</html>
